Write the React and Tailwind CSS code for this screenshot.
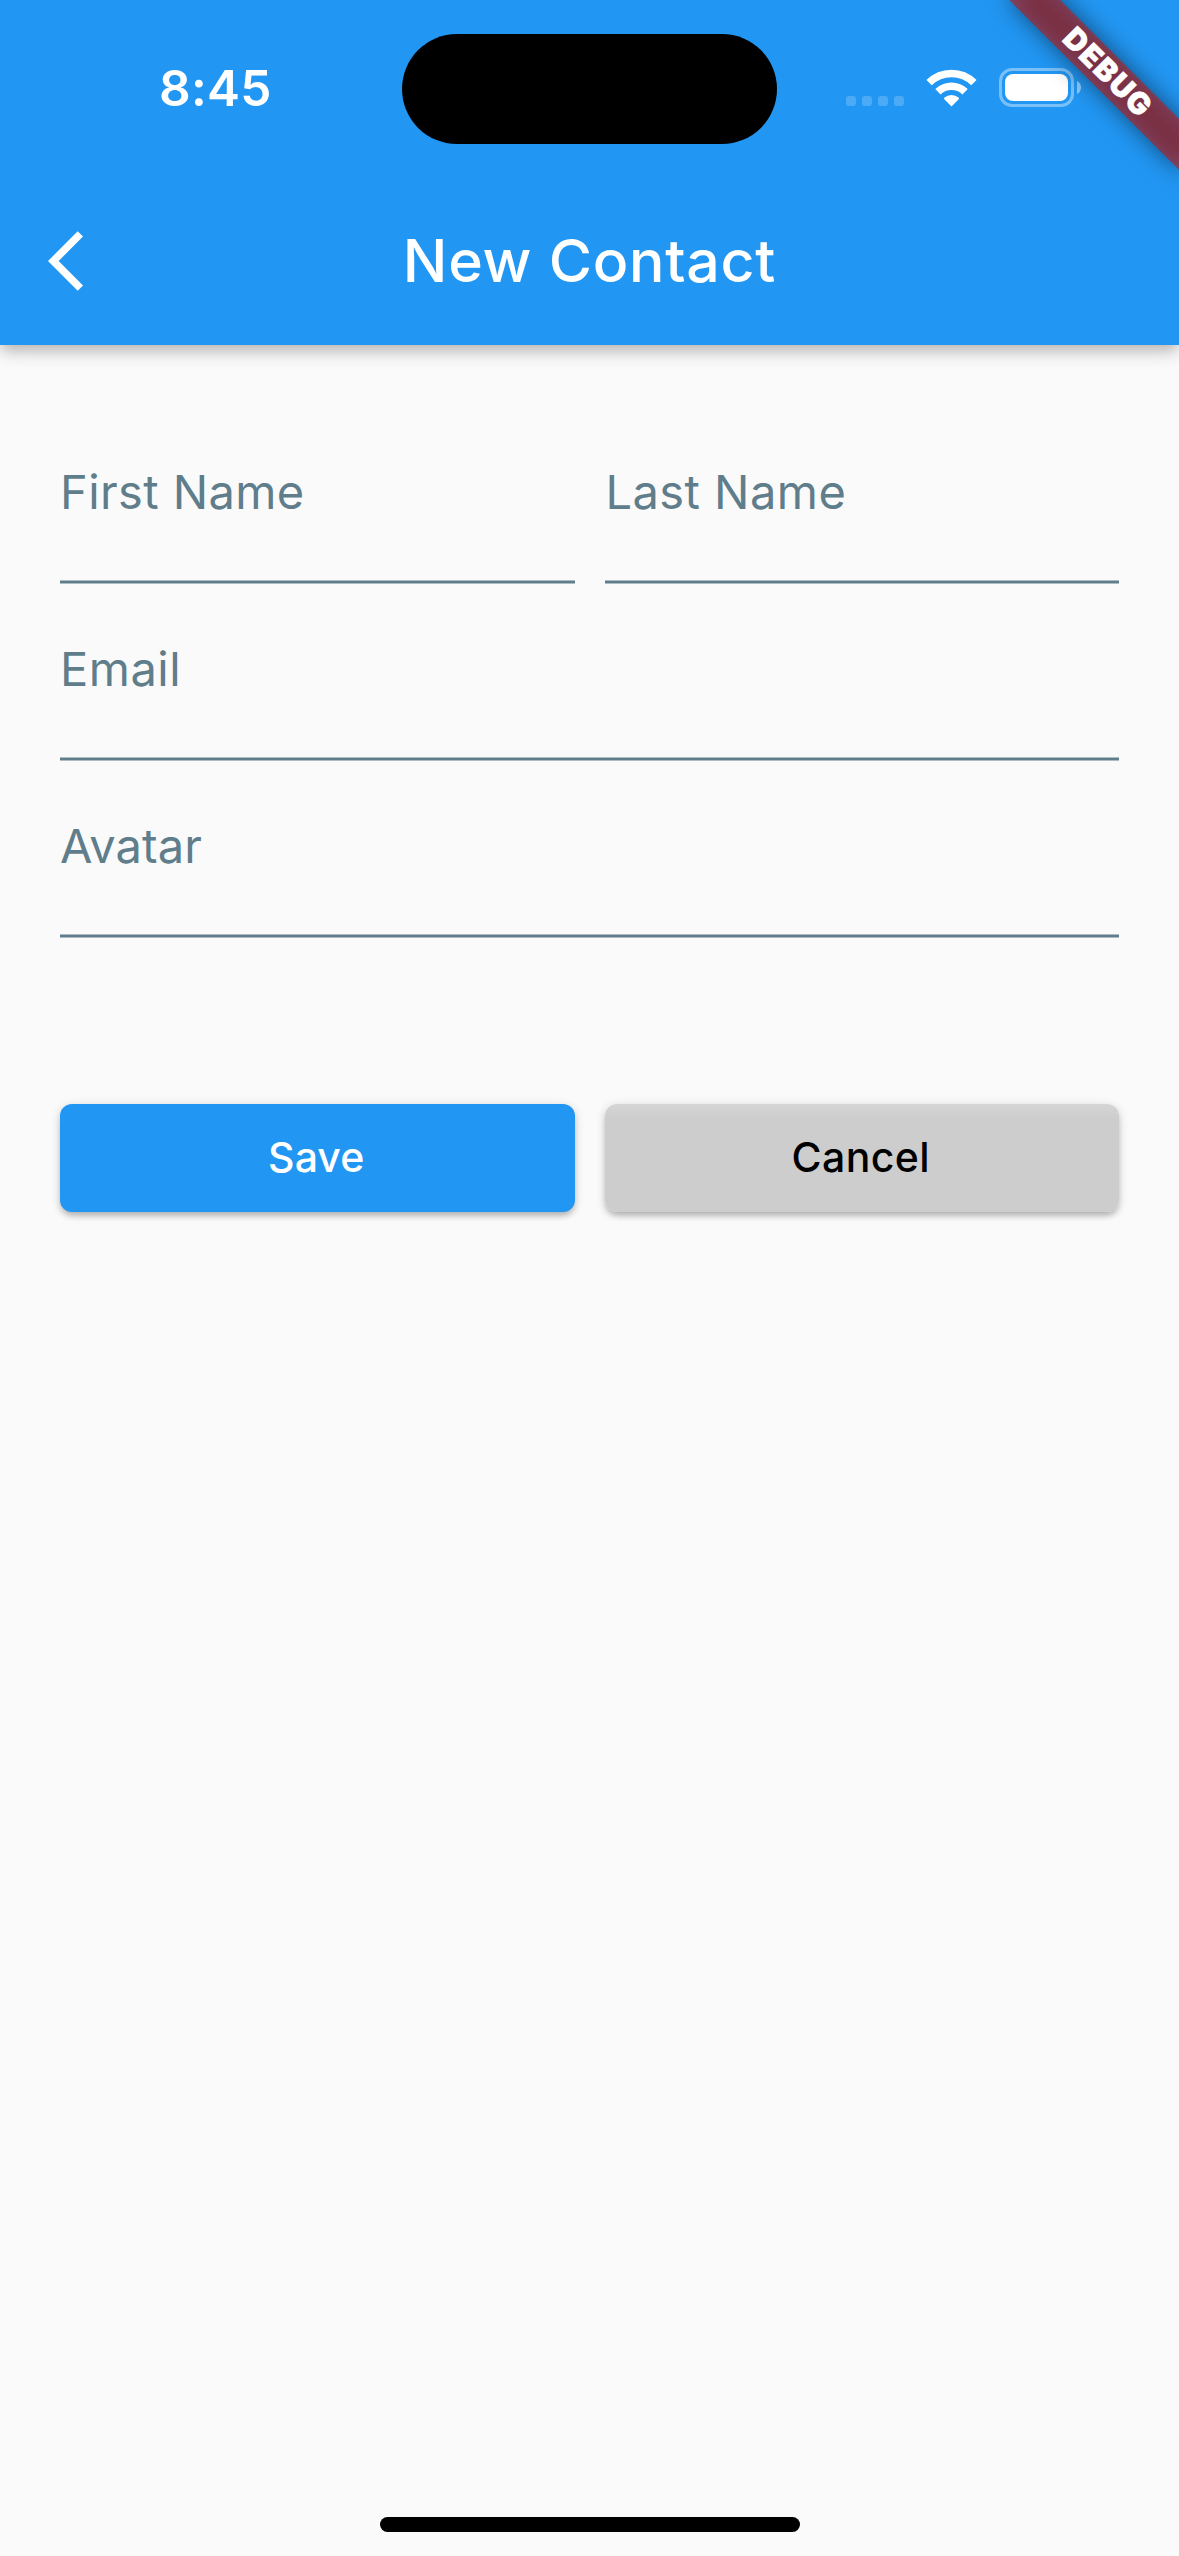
function SignalDots() {
  return (
    <div className="flex h-[37px] items-end gap-[6px]">
      {[0, 1, 2, 3].map((i) => (
        <span key={i} className="size-[10px] rounded-[3px] bg-white/20" />
      ))}
    </div>
  );
}

function WifiIcon() {
  return (
    <svg className="h-[38px] w-[51px]" viewBox="0 0 51 38" fill="none">
      <g stroke="#fff" strokeWidth="7.6">
        <path d="M3.1 13.6a32 32 0 0 1 44.8 0" />
        <path d="M11.9 22.7a19.6 19.6 0 0 1 27.2 0" />
      </g>
      <path
        d="M25.5 37.4 18.3 30.2q-.7-.9.2-1.6a11 11 0 0 1 14 0q.9.7.2 1.6Z"
        fill="#fff"
      />
    </svg>
  );
}

function BatteryIcon() {
  return (
    <div className="flex items-center gap-[3px]">
      <div className="h-[39px] w-[75px] rounded-[13px] border-[3px] border-white/40 p-[3px]">
        <div className="h-full w-full rounded-[8px] bg-white" />
      </div>
      <svg className="h-[13px] w-[4px]" viewBox="0 0 4 13">
        <path d="M0 0C2.4 1 4 3.6 4 6.5S2.4 12 0 13Z" fill="#fff" fillOpacity=".5" />
      </svg>
    </div>
  );
}

function DebugBanner() {
  return (
    <div className="absolute top-0 right-0 size-[240px] overflow-hidden">
      <div className="absolute top-0 right-0 size-0 rotate-45">
        <div className="absolute top-[84px] left-[-120px] h-[36px] w-[240px] bg-black/50 blur-[12px]" />
        <div className="absolute top-[84px] left-[-120px] flex h-[36px] w-[240px] items-center justify-center bg-[#b71c1c]/63 pb-[3px] pl-[2px] text-[30px] leading-none font-black tracking-[1.5px] text-white [-webkit-text-stroke:0.6px_white]">
          DEBUG
        </div>
      </div>
    </div>
  );
}

function Field({ label, spacing = 'tracking-[0.4px]' }) {
  return (
    <label className="flex h-[177px] min-w-0 flex-1 flex-col justify-between pt-[62px]">
      <span className={`text-[47px] leading-[46px] ${spacing}`}>{label}</span>
      <span className="h-[4px] border-y border-[#607d8b]/50 bg-[#607d8b] bg-clip-padding" />
    </label>
  );
}

const buttonBase =
  'flex h-[108px] flex-1 items-center justify-center rounded-[12px] pb-px pr-[2px] text-[41px] font-medium shadow-[0_5px_6px_-2px_rgba(0,0,0,0.2),0_3px_8px_rgba(0,0,0,0.12),0_1px_12px_rgba(0,0,0,0.07)]';

export default function App() {
  return (
    <div className="flex h-[2556px] w-[1179px] flex-col overflow-hidden bg-[#fafafa] font-['Inter',sans-serif] text-[#607d8b]">
      <header className="relative h-[345px] bg-[#2196f3] text-white shadow-[0_6px_12px_-3px_rgba(0,0,0,0.15),0_9px_15px_rgba(0,0,0,0.12),0_2px_24px_rgba(0,0,0,0.06)]">
        <div className="grid h-[177px] grid-cols-[402px_375px_402px] items-center">
          <span className="pl-[159px] text-[49.5px] leading-none font-semibold tracking-[0.3px]">8:45</span>
          <div className="mt-px h-[110px] rounded-[56px] bg-black" />
          <div className="flex items-center pb-[2px] pl-[69px]">
            <SignalDots />
            <div className="ml-[22px]">
              <WifiIcon />
            </div>
            <div className="ml-[22px]">
              <BatteryIcon />
            </div>
          </div>
        </div>
        <div className="grid h-[168px] grid-cols-[168px_1fr_168px] items-center">
          <svg className="ml-[48px] size-[72px]" viewBox="0 0 24 24" fill="#fff">
            <path d="M11.67 3.87 9.9 2.1 0 12l9.9 9.9 1.77-1.77L3.54 12z" />
          </svg>
          <h1 className="pb-[2px] text-center text-[59px] leading-none font-medium tracking-[0.72px]">New Contact</h1>
        </div>
        <DebugBanner />
      </header>

      <main className="flex flex-1 flex-col px-[60px] pt-[62px]">
        <div className="flex gap-[30px]">
          <Field label="First Name" />
          <Field label="Last Name" spacing="tracking-[0.45px] pl-px" />
        </div>
        <div className="flex">
          <Field label="Email" spacing="tracking-[0.5px]" />
        </div>
        <div className="flex">
          <Field label="Avatar" spacing="tracking-[0.1px]" />
        </div>
        <div className="mt-[166px] flex gap-[30px]">
          <button className={`${buttonBase} bg-[#2196f3] tracking-[0.1px] text-white`}>Save</button>
          <button
            className={`${buttonBase} bg-linear-to-b from-[#d5d5d5] to-[#cdcdcd] to-[15px] tracking-[0.4px] text-black`}
          >
            Cancel
          </button>
        </div>
      </main>

      <footer className="flex justify-center pb-[24px]">
        <div className="h-[15px] w-[420px] rounded-full bg-black" />
      </footer>
    </div>
  );
}
